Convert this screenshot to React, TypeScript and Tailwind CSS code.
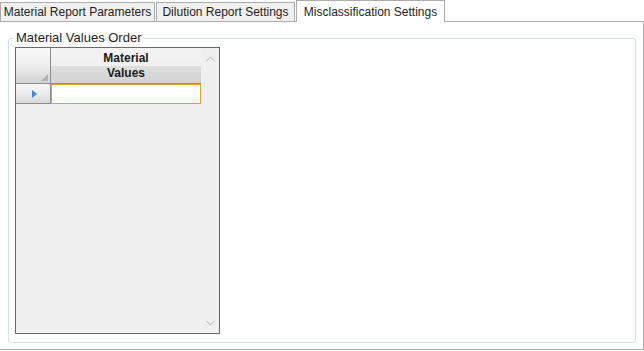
import React from "react"

const tabs = [
  { label: "Material Report Parameters", width: "w-[155px]" },
  { label: "Dilution Report Settings", width: "w-[139px]" },
]

function ChevronUp() {
  return (
    <svg width="9" height="6" viewBox="0 0 9 6" className="text-[#c8c8c8]">
      <path d="M0.5 5 L4.5 1 L8.5 5" fill="none" stroke="currentColor" strokeWidth="1.2" />
    </svg>
  )
}

function ChevronDown() {
  return (
    <svg width="9" height="6" viewBox="0 0 9 6" className="text-[#c8c8c8]">
      <path d="M0.5 1 L4.5 5 L8.5 1" fill="none" stroke="currentColor" strokeWidth="1.2" />
    </svg>
  )
}

export default function App() {
  return (
    <div className="w-[644px] h-[351px] bg-white font-['Liberation_Sans',Arial,sans-serif] text-[12px] text-[#1e1e1e] overflow-hidden">
      {/* Tab strip */}
      <div className="flex items-end h-[21px]">
        {tabs.map(t => (
          <div
            key={t.label}
            className={`${t.width} h-[19px] mr-[1px] border border-b-0 border-[#acacac] bg-[#f0f0f0] flex items-center justify-center leading-none`}
          >
            {t.label}
          </div>
        ))}
        <div className="w-[149px] h-[22px] -mb-[1px] border border-b-0 border-[#acacac] bg-white flex items-center justify-center leading-none relative z-10">
          Misclassification Settings
        </div>
      </div>

      {/* Tab content */}
      <div className="h-[329px] border border-l-0 border-[#acacac] bg-white pt-[16px] pl-[8px] pr-[7px] pb-[6px]">
        {/* Group box */}
        <div className="relative h-full border border-[#d5dfe5] rounded-[3px] pt-[8px] pl-[6px]">
          <span className="absolute -top-[9px] left-[4px] bg-white px-[3px] leading-[15px] text-[13px] text-[#1e1e1e]">
            Material Values Order
          </span>

          {/* Data grid */}
          <div className="w-[205px] h-[287px] border border-[#6a6a6a] bg-[#f0f0f0] flex">
            <div className="flex-1 flex flex-col">
              {/* Header row */}
              <div className="flex h-[36px] border-b border-[#8c8c8c]">
                <div className="w-[35px] border-r border-[#8c8c8c] bg-[linear-gradient(#fafafa,#f0f0f0_45%,#d4d4d4)] relative">
                  <div className="absolute right-[2px] bottom-[2px] w-0 h-0 border-l-[7px] border-l-transparent border-b-[7px] border-b-[#b4b4b4]" />
                </div>
                <div className="flex-1 bg-[linear-gradient(#f3f3f3,#f0f0f0_50%,#dedede_50%,#d3d3d3)] flex flex-col items-center justify-center font-bold leading-[15px] text-[#1a1a1a]">
                  <span>Material</span>
                  <span>Values</span>
                </div>
              </div>
              {/* Data row */}
              <div className="flex h-[20px]">
                <div className="w-[35px] border-r border-b border-[#8c8c8c] bg-[linear-gradient(#f7f7f7,#ececec_50%,#d8d8d8)] flex items-center justify-center">
                  <div className="w-0 h-0 border-t-[4px] border-t-transparent border-b-[4px] border-b-transparent border-l-[5px] border-l-[#3d8bd4] ml-[2px]" />
                </div>
                <div className="flex-1 bg-white border border-[#e5a32b]" />
              </div>
            </div>
            {/* Vertical scrollbar */}
            <div className="w-[18px] flex flex-col items-center justify-between pt-[8px] pb-[7px]">
              <ChevronUp />
              <ChevronDown />
            </div>
          </div>
        </div>
      </div>
    </div>
  )
}
